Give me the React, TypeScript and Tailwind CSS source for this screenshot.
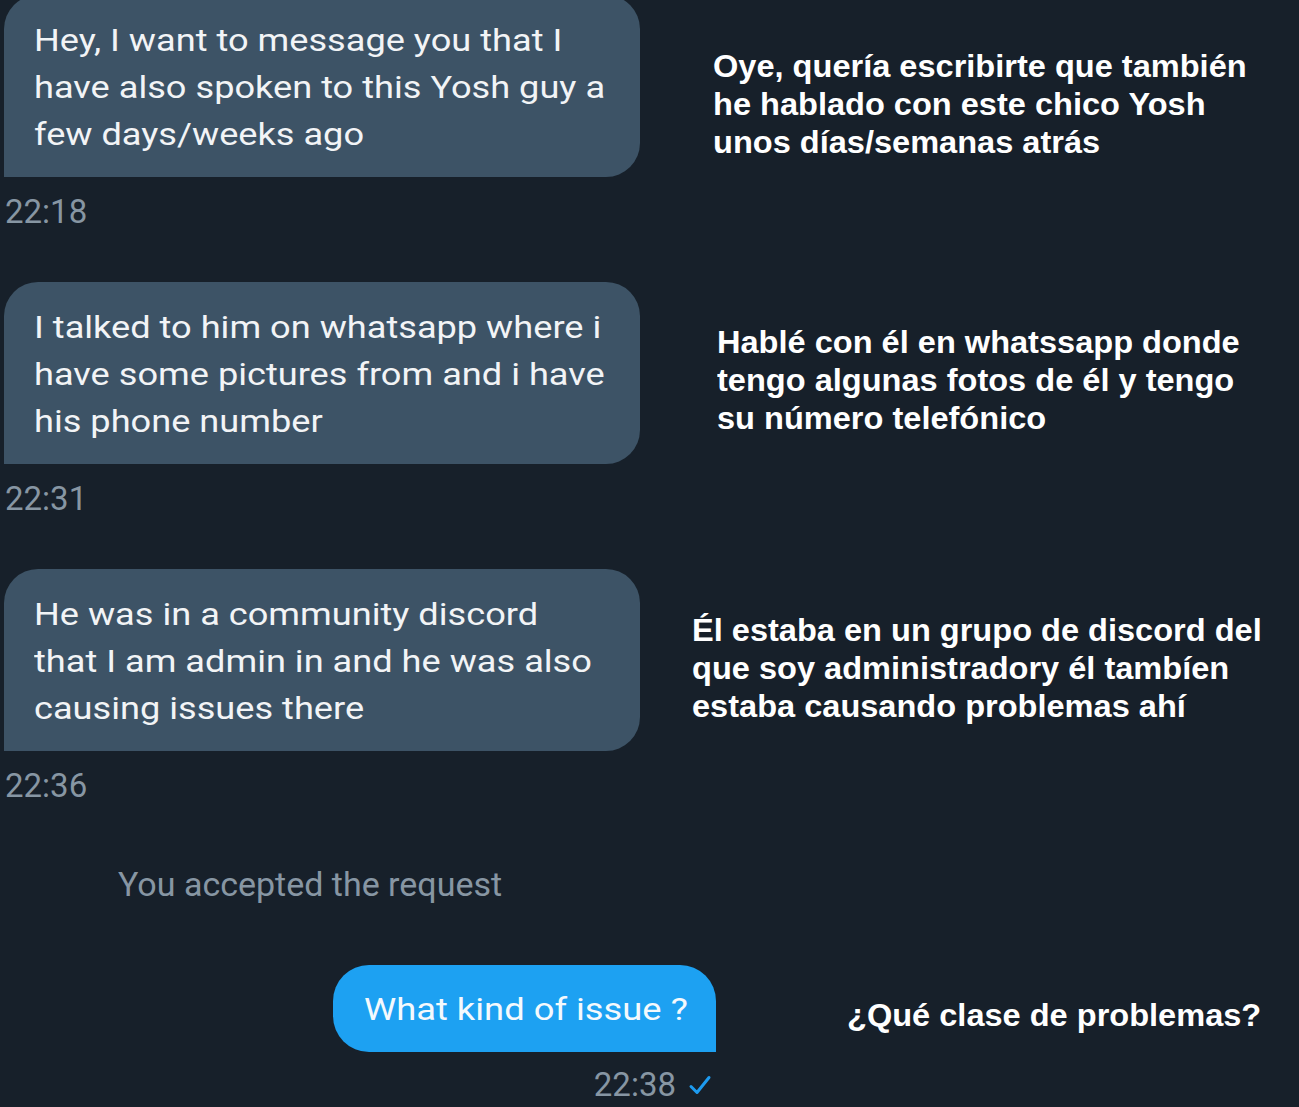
import React from 'react'

type Msg = {
  lines: string[]
  time: string
  es: string[]
  esTop: string
  esLeft: string
}

const MESSAGES: Msg[] = [
  {
    lines: ['Hey, I want to message you that I', 'have also spoken to this Yosh guy a', 'few days/weeks ago'],
    time: '22:18',
    es: ['Oye, quería escribirte que también', 'he hablado con este chico Yosh', 'unos días/semanas atrás'],
    esTop: 'mt-[53px]',
    esLeft: 'pl-[73px]',
  },
  {
    lines: ['I talked to him on whatsapp where i', 'have some pictures from and i have', 'his phone number'],
    time: '22:31',
    es: ['Hablé con él en whatssapp donde', 'tengo algunas fotos de él y tengo', 'su número telefónico'],
    esTop: 'mt-[42px]',
    esLeft: 'pl-[77px]',
  },
  {
    lines: ['He was in a community discord', 'that I am admin in and he was also', 'causing issues there'],
    time: '22:36',
    es: ['Él estaba en un grupo de discord del', 'que soy administradory él tambíen', 'estaba causando problemas ahí'],
    esTop: 'mt-[43px]',
    esLeft: 'pl-[52px]',
  },
]

const roboto = { fontFamily: 'Roboto, "Noto Sans", sans-serif' }
const arial = { fontFamily: '"Liberation Sans", Arial, sans-serif' }

export default function App() {
  return (
    <div className="min-h-[1107px] w-[1299px] overflow-hidden bg-[#17202a]">
      <div className="-mt-[5px] flex flex-col">
        {MESSAGES.map((m, i) => (
          <div key={m.time} className={`flex ${i === 0 ? '' : 'mt-[50px]'}`}>
            <div className="w-[640px] shrink-0 pl-[4px]" style={roboto}>
              <div className="h-[182px] rounded-[34px] rounded-bl-none bg-[#3d5366] pl-[30px] pt-[22px] text-[32px] leading-[47px] text-[#f2f4f6]">
                {m.lines.map((l) => (
                  <div key={l} className="origin-left scale-x-[1.13] whitespace-nowrap">{l}</div>
                ))}
              </div>
              <div className="mt-[15px] pl-[1px] text-[33px] leading-[40px] text-[#8796a3]">{m.time}</div>
            </div>
            <div className={`${m.esTop} ${m.esLeft} text-[31px] font-bold leading-[38px] text-white`} style={arial}>
              {m.es.map((l) => (
                <div key={l} className="origin-left scale-x-[1.05] whitespace-nowrap">{l}</div>
              ))}
            </div>
          </div>
        ))}

        <div className="mt-[59px] pl-[118px] text-[33px] leading-[40px] text-[#8796a3]" style={roboto}>
          <span className="inline-block origin-left scale-x-[1.03] whitespace-nowrap">You accepted the request</span>
        </div>

        <div className="mt-[60px] flex items-center">
          <div className="w-[716px] shrink-0 flex flex-col items-end" style={roboto}>
            <div className="flex h-[87px] w-[383px] items-center rounded-[36px] rounded-br-none bg-[#1da1f2] pl-[31px] pt-[1px] text-[32px] text-[#f4f9fd]">
              <span className="inline-block origin-left scale-x-[1.135] whitespace-nowrap">What kind of issue ?</span>
            </div>
          </div>
          <div className="mt-[14px] pl-[131px] text-[31px] font-bold leading-[38px] text-white" style={arial}>
            <span className="inline-block origin-left scale-x-[1.05] whitespace-nowrap">¿Qué clase de problemas?</span>
          </div>
        </div>

        <div className="mt-[13px] flex w-[716px] items-center justify-end gap-[12px] pr-[4px]" style={roboto}>
          <span className="text-[33px] leading-[40px] text-[#8796a3]">22:38</span>
          <svg width="24" height="22" viewBox="0 0 24 22" fill="none">
            <path d="M3 12.5 L9 18.5 L21 3.5" stroke="#1d9bf0" strokeWidth="3" strokeLinecap="round" strokeLinejoin="round" />
          </svg>
        </div>
      </div>
    </div>
  )
}
